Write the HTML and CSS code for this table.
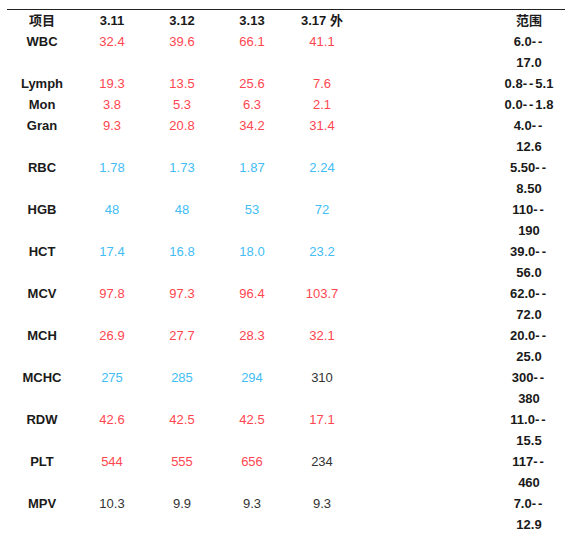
FILE: index.html
```html
<!DOCTYPE html>
<html lang="zh">
<head>
<meta charset="UTF-8">
<meta name="viewport" content="width=device-width, initial-scale=1.0">
<title>血常规</title>
<link rel="stylesheet" href="styles.css">
</head>
<body>
<table class="tbl">
    <colgroup>
        <col class="c">
        <col class="c">
        <col class="c">
        <col class="c">
        <col class="c">
        <col class="gap">
        <col class="rng">
    </colgroup>
    <tr class="head">
        <th>项目</th><th>3.11</th><th>3.12</th><th>3.13</th><th>3.17 外</th><th></th><th>范围</th>
    </tr>
    <tr>
        <th>WBC</th><td class="hi">32.4</td><td class="hi">39.6</td><td class="hi">66.1</td><td class="hi">41.1</td><td></td><th>6.0<span class="dash">--</span><br>17.0</th>
    </tr>
    <tr>
        <th>Lymph</th><td class="hi">19.3</td><td class="hi">13.5</td><td class="hi">25.6</td><td class="hi">7.6</td><td></td><th>0.8<span class="dash">--</span>5.1</th>
    </tr>
    <tr>
        <th>Mon</th><td class="hi">3.8</td><td class="hi">5.3</td><td class="hi">6.3</td><td class="hi">2.1</td><td></td><th>0.0<span class="dash">--</span>1.8</th>
    </tr>
    <tr>
        <th>Gran</th><td class="hi">9.3</td><td class="hi">20.8</td><td class="hi">34.2</td><td class="hi">31.4</td><td></td><th>4.0<span class="dash">--</span><br>12.6</th>
    </tr>
    <tr>
        <th>RBC</th><td class="lo">1.78</td><td class="lo">1.73</td><td class="lo">1.87</td><td class="lo">2.24</td><td></td><th>5.50<span class="dash">--</span><br>8.50</th>
    </tr>
    <tr>
        <th>HGB</th><td class="lo">48</td><td class="lo">48</td><td class="lo">53</td><td class="lo">72</td><td></td><th>110<span class="dash">--</span><br>190</th>
    </tr>
    <tr>
        <th>HCT</th><td class="lo">17.4</td><td class="lo">16.8</td><td class="lo">18.0</td><td class="lo">23.2</td><td></td><th>39.0<span class="dash">--</span><br>56.0</th>
    </tr>
    <tr>
        <th>MCV</th><td class="hi">97.8</td><td class="hi">97.3</td><td class="hi">96.4</td><td class="hi">103.7</td><td></td><th>62.0<span class="dash">--</span><br>72.0</th>
    </tr>
    <tr>
        <th>MCH</th><td class="hi">26.9</td><td class="hi">27.7</td><td class="hi">28.3</td><td class="hi">32.1</td><td></td><th>20.0<span class="dash">--</span><br>25.0</th>
    </tr>
    <tr>
        <th>MCHC</th><td class="lo">275</td><td class="lo">285</td><td class="lo">294</td><td>310</td><td></td><th>300<span class="dash">--</span><br>380</th>
    </tr>
    <tr>
        <th>RDW</th><td class="hi">42.6</td><td class="hi">42.5</td><td class="hi">42.5</td><td class="hi">17.1</td><td></td><th>11.0<span class="dash">--</span><br>15.5</th>
    </tr>
    <tr>
        <th>PLT</th><td class="hi">544</td><td class="hi">555</td><td class="hi">656</td><td>234</td><td></td><th>117<span class="dash">--</span><br>460</th>
    </tr>
    <tr>
        <th>MPV</th><td>10.3</td><td>9.9</td><td>9.3</td><td>9.3</td><td></td><th>7.0<span class="dash">--</span><br>12.9</th>
    </tr>
</table>
</body>
</html>
```

FILE: styles.css
```css
body {
    margin: 0;
    padding: 9px 6px 0 7px;
    background: #fff;
    font-family: "Liberation Sans", Arial, "Noto Sans CJK SC", sans-serif;
    font-size: 13px;
    color: #222;
}

.tbl {
    width: 558px;
    border-collapse: collapse;
    table-layout: fixed;
    border-top: 1px solid #222;
}

.c {
    width: 70px;
}

.rng {
    width: 72px;
}

.tbl th,
.tbl td {
    padding: 0;
    line-height: 21px;
    text-align: center;
    vertical-align: top;
    white-space: nowrap;
}

.tbl th {
    font-weight: bold;
    color: #1a1a1a;
}

.tbl td {
    font-weight: normal;
    color: #333;
}

.tbl td.hi {
    color: #ff4650;
}

.tbl td.lo {
    color: #42bdf5;
}

.dash {
    letter-spacing: 2px;
}
```
